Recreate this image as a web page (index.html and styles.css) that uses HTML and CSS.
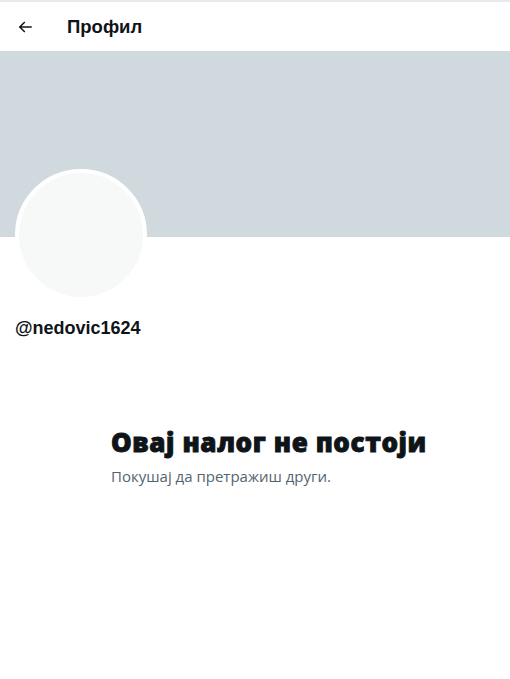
FILE: index.html
```html
<!DOCTYPE html>
<html lang="sr">
<head>
    <meta charset="UTF-8">
    <meta name="viewport" content="width=device-width, initial-scale=1.0">
    <title>Профил</title>
    <link rel="stylesheet" href="styles.css">
</head>
<body>
    <div class="page">
        <header class="top-bar">
            <button class="back-btn" aria-label="Назад">
                <svg viewBox="0 0 24 24" width="18" height="18">
                    <path d="M7.414 13l5.043 5.04-1.414 1.42L3.586 12l7.457-7.46 1.414 1.42L7.414 11H21v2H7.414z"></path>
                </svg>
            </button>
            <h2 class="title">Профил</h2>
        </header>

        <div class="banner"></div>

        <div class="profile">
            <div class="avatar"></div>
            <div class="handle">@nedovic1624</div>
        </div>

        <div class="empty">
            <h1 class="empty-title">Овај налог не постоји</h1>
            <p class="empty-text">Покушај да претражиш други.</p>
        </div>
    </div>
</body>
</html>
```

FILE: styles.css
```css
body {
    margin: 0;
    background-color: #ffffff;
    font-family: "Open Sans", "Liberation Sans", Arial, sans-serif;
    color: #0f1419;
}
.page {
    border-top: 2px solid #e7e9ea;
}
.top-bar {
    height: 49px;
    display: flex;
    align-items: center;
    padding: 0 15px;
}
.back-btn {
    width: 20px;
    height: 20px;
    padding: 0;
    border: none;
    background: none;
    display: flex;
    align-items: center;
    justify-content: center;
    margin-right: 32px;
}
.back-btn svg {
    fill: #0f1419;
}
.title {
    margin: 0;
    font-size: 18.5px;
    font-weight: 700;
    font-family: "Liberation Sans", Arial, sans-serif;
}
.banner {
    height: 186px;
    background-color: #cfd9de;
}
.profile {
    padding: 0 15px;
}
.avatar {
    width: 124px;
    height: 124px;
    border-radius: 50%;
    background-color: #f7f9f9;
    border: 4px solid #ffffff;
    margin-top: -68px;
}
.handle {
    margin-top: 17px;
    font-family: "Liberation Sans", Arial, sans-serif;
    font-size: 18px;
    font-weight: 700;
}
.empty {
    padding: 87px 0 0 111px;
}
.empty-title {
    margin: 0;
    font-size: 26px;
    font-weight: 800;
    line-height: 32px;
    letter-spacing: 0.6px;
    -webkit-text-stroke: 0.9px #0f1419;
}
.empty-text {
    margin: 8px 0 0;
    font-size: 15px;
    color: #536471;
}
```
